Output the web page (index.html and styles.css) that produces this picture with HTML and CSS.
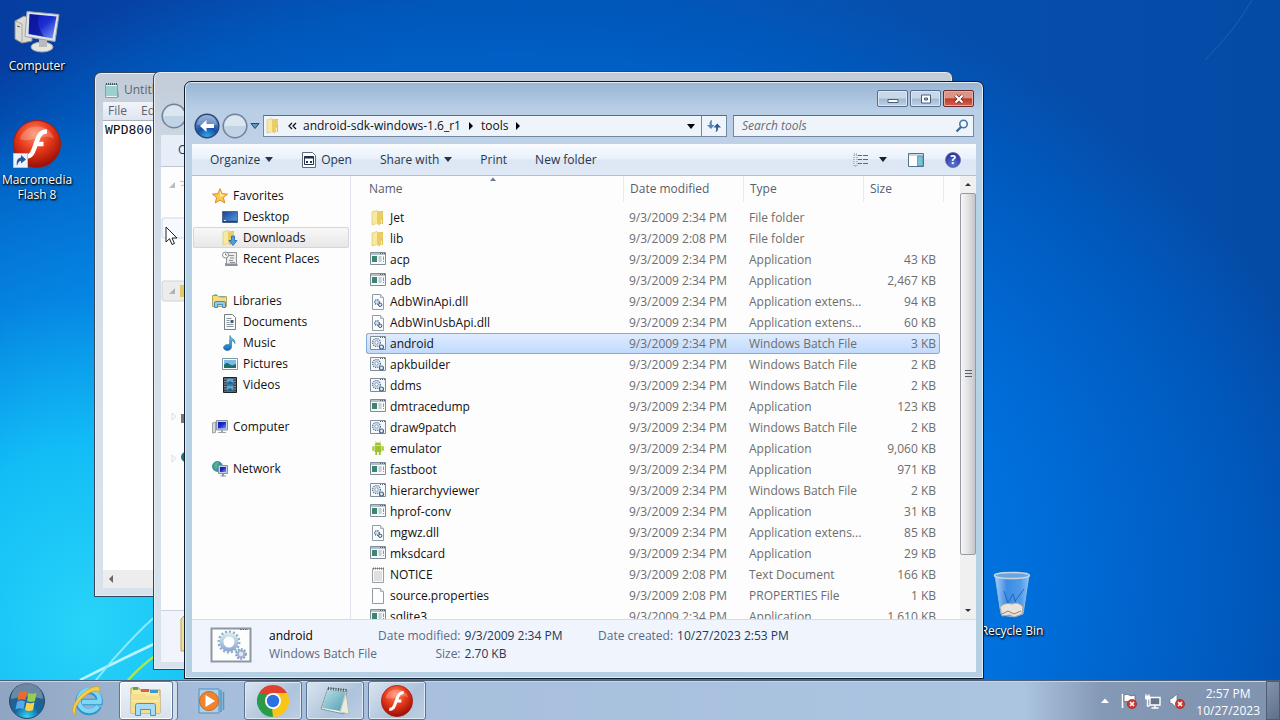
FILE: index.html
```html
<!DOCTYPE html>
<html lang="en">
<head>
<meta charset="utf-8">
<title>tools</title>
<link rel="stylesheet" href="styles.css">
</head>
<body>
<svg class="defs" aria-hidden="true">
  <defs>
    <linearGradient id="gFolder" x1="0" x2="1"><stop offset="0" stop-color="#fbeda0"/><stop offset="1" stop-color="#dcba4c"/></linearGradient>
    <linearGradient id="gScreen" x1="0" x2="1" y2="1"><stop offset="0" stop-color="#0a18b0"/><stop offset=".5" stop-color="#1c2ed0"/><stop offset="1" stop-color="#7ea0f4"/></linearGradient>
    <linearGradient id="gBlue" x1="0" x2="0" y1="0" y2="1"><stop offset="0" stop-color="#7fd0ee"/><stop offset="1" stop-color="#1468b4"/></linearGradient>
    <linearGradient id="gGear" x1="0" x2="0" y1="0" y2="1"><stop offset="0" stop-color="#d3e8ea"/><stop offset="1" stop-color="#8facd8"/></linearGradient>
    <linearGradient id="gPad" x1="0" x2="1" y1="0" y2="1"><stop offset="0" stop-color="#c3e2e8"/><stop offset="1" stop-color="#4d9fb0"/></linearGradient>
    <linearGradient id="gDesk" x1="0" x2="1" y1="0" y2="1"><stop offset="0" stop-color="#18408e"/><stop offset="1" stop-color="#5da0e8"/></linearGradient>
    <radialGradient id="gFlash" cx=".45" cy=".3" r=".75"><stop offset="0" stop-color="#fb8a62"/><stop offset=".45" stop-color="#e93a1c"/><stop offset="1" stop-color="#8c0804"/></radialGradient>
    <radialGradient id="gOrb" cx=".5" cy=".95" r=".9"><stop offset="0" stop-color="#35d6f4"/><stop offset=".4" stop-color="#12689f"/><stop offset="1" stop-color="#3a5878"/></radialGradient>
    <radialGradient id="gBack" cx=".5" cy="1" r=".9"><stop offset="0" stop-color="#3fb0ee"/><stop offset=".5" stop-color="#1450a8"/><stop offset="1" stop-color="#6f93c8"/></radialGradient>
    <linearGradient id="gBin" x1="0" x2="1"><stop offset="0" stop-color="#a9cff6"/><stop offset=".35" stop-color="#3c8ce4"/><stop offset=".75" stop-color="#4f9bea"/><stop offset="1" stop-color="#8cc0f4"/></linearGradient>
  </defs>
  <symbol id="folder" viewBox="0 0 16 16"><path d="M2 2l5-1.500v13L2 15z" fill="#f7e9a0" stroke="#d9c36a" stroke-width=".6"/><path d="M6 1h7v13H6z" fill="url(#gFolder)"/><path d="M7 1v13l3 1.500V8l3-1V2z" fill="#e8cd6a"/><path d="M11.500 9.500v4" stroke="#fff4b4"/></symbol>
  <symbol id="app" viewBox="0 0 16 16"><path d="M.5.500h15v12H.5z" fill="#f7f9fa" stroke="#7f8d98"/><path d="M1 2h14" stroke="#b4c0ca" stroke-width="2"/><path d="M10 1.500h1m1 0h1m1 0h1" stroke="#53616e"/><path d="M2 4h5v6H2z" fill="#3b8577"/><path d="M8.500 5h3m-3 2h3m-3 2h3" stroke="#9aa5ad"/><path d="M13.500 4.500V8m0 1v1" stroke="#7e98c4"/></symbol>
  <symbol id="batch" viewBox="0 0 16 16"><path d="M.5.500h15v13H.5z" fill="#f4f8fb" stroke="#7f8d98"/><path d="M10 1.500h1m1 0h1m1 0h1" stroke="#53616e"/><circle cx="6.500" cy="6.500" r="3.900" fill="#dce8f2" stroke="#506f94" stroke-width="1.300" stroke-dasharray="1.100 1"/><circle cx="6.500" cy="6.500" r="1.700" fill="#fff" stroke="#6e88a8" stroke-width=".8"/><circle cx="11.500" cy="11" r="2" fill="#e9f1f7" stroke="#456489" stroke-width="1.200"/></symbol>
  <symbol id="dll" viewBox="0 0 16 16"><path d="M2.500.5h8l3 3v12h-11z" fill="#fbfcfd" stroke="#929ca6"/><path d="M10.500.5v3h3" fill="#dde4ea" stroke="#a7b0b8"/><circle cx="7" cy="8" r="2.300" fill="#d2dfeb" stroke="#46617f" stroke-width="1.200" stroke-dasharray="1.200 .8"/><circle cx="10.200" cy="10.800" r="1.700" fill="#e2ebf2" stroke="#39567a"/></symbol>
  <symbol id="textfile" viewBox="0 0 16 16"><path d="M2.500 1.500h11v14h-11z" fill="#fafafa" stroke="#9ba0a5"/><path d="M3 1.500h11" stroke="#6f777e" stroke-width="2" stroke-dasharray="1 1"/><path d="M4 5h8M4 7h8M4 9h8M4 11h8M4 13h8" stroke="#bbbfc4" stroke-width=".9"/></symbol>
  <symbol id="blank" viewBox="0 0 16 16"><path d="M2.500.5h8l3 3v12h-11z" fill="#fdfdfd" stroke="#929ca6"/><path d="M10.500.5v3h3" fill="#e8e8e8" stroke="#a7b0b8"/></symbol>
  <symbol id="droid" viewBox="0 0 16 16"><path d="M4.500 4.500c0-4 7-4 7 0zM4.500 5h7v6h-7zM5.300 11h1.900v3H5.300zM8.800 11h1.900v3H8.800zM2.300 5.200h1.600v4.500H2.300zM12.100 5.200h1.600v4.500h-1.600z" fill="#a0c030"/><path d="M5.400.3l1 1.800M10.600.3l-1 1.800" stroke="#a0c030" stroke-width=".7"/></symbol>
  <symbol id="star" viewBox="0 0 16 16"><path d="M8 .7l2.100 5 5.400.4-4.100 3.500 1.300 5.300L8 12.100l-4.700 2.800 1.300-5.300L.5 6.100l5.400-.4z" fill="#fbc94e" stroke="#dd7d22" stroke-width=".9"/><path d="M8 2.500l1.400 4 3.600.4-5 2z" fill="#fff0a8"/></symbol>
  <symbol id="desktop" viewBox="0 0 16 16"><path d="M.5 2.500h15v11H.5z" fill="url(#gDesk)" stroke="#51688e"/><path d="M1 12.500h14" stroke="#24436f" stroke-width="1.500"/><path d="M2 11h2v1H2z" fill="#d8e8f8"/></symbol>
  <symbol id="downloads" viewBox="0 0 16 16"><use href="#folder" x="-1" width="16" height="16"/><path d="M9.500 6h3v4.500H15L11 15.500 7 10.500h2.500z" fill="#4b9fe2" stroke="#2166ac" stroke-width=".8"/></symbol>
  <symbol id="recent" viewBox="0 0 16 16"><path d="M4.500 1.500h10v11l1 2H3.500v-2h1z" fill="#ececec" stroke="#8f9498"/><path d="M7 4.500h5M8 7h4M7 9.500h4m-3 2h5" stroke="#8b9196"/><path d="M3 13.500h12" stroke="#8b9196" stroke-width="2"/><circle cx="3.500" cy="4" r="3" fill="#fff" stroke="#888d92"/><path d="M3.500 2.300V4H5" fill="none" stroke="#666" stroke-width=".8"/></symbol>
  <symbol id="libraries" viewBox="0 0 16 16"><path d="M.5 2.500h5l1 1h8v10H.5z" fill="#f4dc86" stroke="#b9a258"/><path d="M2 2h3" stroke="#49a061"/><path d="M8 4h5" stroke="#6ba9c8"/><path d="M2.500 14.500V10q0-1.500 1.500-1.500h8q1.500 0 1.500 1.500v4.500h-3v-3h-5v3z" fill="#8fcbe9" stroke="#458db5"/></symbol>
  <symbol id="doc" viewBox="0 0 16 16"><path d="M2.500.5h8l3 3v12h-11z" fill="#fbfbfb" stroke="#767d84"/><path d="M4.500 4.500h5m-5 2h3m-3 2h3m-3 2h7m-7 2h7" stroke="#8c96a0"/><path d="M8.500 6h3v3h-3z" fill="#4b5a68"/></symbol>
  <symbol id="music" viewBox="0 0 16 16"><path d="M8 .5c.5 3 5.500 3.500 5 8-.8-2-2-2.600-3.500-2.700V12c0 2.200-2 3.500-4.200 3.500S1.500 14 1.500 12.500s2-3 4-3c.8 0 1.500.1 2 .4z" fill="url(#gBlue)" stroke="#1b6aa6" stroke-width=".6"/></symbol>
  <symbol id="pictures" viewBox="0 0 16 16"><path d="M.5 2.500h15v11H.5z" fill="#fff" stroke="#8495a5"/><path d="M2 4h12v8H2z" fill="#78bde8"/><path d="M2 9c3-4 5-1 7 0s3-.5 5-1v4H2z" fill="#236c6c"/></symbol>
  <symbol id="videos" viewBox="0 0 16 16"><path d="M1.500.5h13v15h-13z" fill="#38434e" stroke="#222"/><path d="M4.500 1.500h7v6h-7zM4.500 8.500h7v6h-7z" fill="#57a8dc"/><path d="M5 6l3-2 3 2v1H5zM5 13l3-2 3 2v1H5z" fill="#315f84"/><path d="M3 1.500v13M13 1.500v13" stroke="#dfe4e8" stroke-dasharray="1 1.500"/></symbol>
  <symbol id="pc" viewBox="0 0 16 16"><path d="M.5 4l3-1v10.500l-3 .5z" fill="#d7d9da" stroke="#818589" stroke-width=".7"/><path d="M4.500 1.500h11v9.500h-11z" fill="#ccd2dc" stroke="#8b919d"/><path d="M6 3h8v6.500H6z" fill="url(#gScreen)"/><path d="M9 11h2v2h3v1H6v-1h3z" fill="#9ca3ae"/></symbol>
  <symbol id="network" viewBox="0 0 16 16"><circle cx="5.500" cy="5.500" r="5" fill="#2e96b9" stroke="#16697e" stroke-width=".6"/><path d="M2 3c2-2 4-2 5-1L5 4l1 2-3 3z" fill="#55b67c"/><path d="M6.500 4.500h9v8h-9z" fill="#c9d0db" stroke="#8b919d"/><path d="M8 6h6v5H8z" fill="url(#gScreen)"/><path d="M10 13h2v1.500h2v1H8.500v-1H10z" fill="#8c93a2"/></symbol>
  <symbol id="flash" viewBox="0 0 48 48"><circle cx="24" cy="24" r="23.500" fill="url(#gFlash)" stroke="#a71a0c"/><path d="M7 19C10 3 37 2 41 19 31 12 17 24 7 19z" fill="#fff" opacity=".22"/><path d="M34 11.500c-8-.5-9 7-11.500 13.500S19 37 12.500 36.500M21 24h9.500" fill="none" stroke="#fff" stroke-width="4.600"/></symbol>
  <symbol id="notepad" viewBox="0 0 32 32"><path d="M9 3l19 2-3 24L2 24z" fill="#f8fafa" stroke="#83939b"/><path d="M9 4l18 2-6 20-18-3z" fill="url(#gPad)"/><path d="M27 8l3 21-9-2z" fill="#eaebdc" stroke="#a8aaa0" stroke-width=".6"/><path d="M9 3.500l19 2" stroke="#4c565b" stroke-width="3" stroke-dasharray="1 1.500"/></symbol>
  <symbol id="pad-small" viewBox="0 0 16 16"><path d="M1.500 2.500h12v13h-12z" fill="#e8f3f2" stroke="#82a5a5"/><path d="M2 4h11v10H2z" fill="#9bd0cf"/><path d="M13.500 3l1.500 12h-2z" fill="#7ba8ac"/><path d="M2 2h12" stroke="#40565a" stroke-width="2" stroke-dasharray="1 1"/></symbol>
  <symbol id="gears" viewBox="0 0 42 36"><path d="M1.500 1.500h39v33h-39z" fill="#fcfdfd" stroke="#8f97a2" stroke-width="2"/><path d="M30 2.500h8" stroke="#5d6670" stroke-dasharray="1.500 1"/><circle cx="19" cy="15" r="9.500" fill="none" stroke="#93afc6" stroke-width="4" stroke-dasharray="2 1.700"/><circle cx="19" cy="15" r="7.500" fill="#fff" stroke="url(#gGear)" stroke-width="4"/><circle cx="31" cy="27" r="4.600" fill="none" stroke="#7f93b2" stroke-width="2.500" stroke-dasharray="1.700 1.300"/><circle cx="31" cy="27" r="3.300" fill="#dfe9f4" stroke="#9fb3d2" stroke-width="2.200"/></symbol>
  <symbol id="nav-round" viewBox="0 0 26 26"><circle cx="13" cy="13" r="11.800" fill="#c3d3e6" stroke="#71839b" stroke-width="1.500"/><path d="M2.500 13a10.500 10.500 0 0 1 21 0z" fill="#dbe6f1"/></symbol>
  <symbol id="bad" viewBox="0 0 10 10"><circle cx="5" cy="5" r="4.600" fill="#cf3830" stroke="#942018" stroke-width=".6"/><path d="M3 3l4 4m0-4L3 7" stroke="#fff" stroke-width="1.600"/></symbol>
</svg>

<main class="desktop">
  <svg class="wallpaper" viewBox="0 0 1280 680" preserveAspectRatio="none" aria-hidden="true">
    <path d="M80 680Q120 660 154 644" stroke="#b9f4ff" stroke-width="2.500"/>
    <path d="M96 680Q128 640 160 612" stroke="#8ee9fc" stroke-width="2"/>
    <path d="M128 680Q142 665 156 655" stroke="#a6e657" stroke-width="2.500"/>
    <path d="M1205 60Q1235 30 1252 0" stroke="#3b83d0" opacity=".4"/>
  </svg>

  <button class="shortcut computer-shortcut">
    <svg width="48" height="44" viewBox="0 0 48 44"><path d="M2 11l9-5 8 3v22l-10 2-7-4z" fill="#dcdcd6" stroke="#8e9190"/><path d="M2 11l7 3v19" fill="none" stroke="#a5a8a6"/><path d="M4 16l3 1" stroke="#555"/><ellipse cx="29" cy="37" rx="11" ry="5" fill="#e5e6e4" stroke="#a6a8a6"/><path d="M26 29l8 1v7h-8z" fill="#b9bcbc"/><path d="M14 1.500l32 3-4 27-30-5z" fill="#dfe3e8" stroke="#9da6b2"/><path d="M16.500 4l27 2.500-4 22-24-4.500z" fill="url(#gScreen)"/><path d="M17 4.500l9 1c-3 8 1 15 5 21l-15-3z" fill="#0a1490" opacity=".7"/></svg>
    <span>Computer</span>
  </button>
  <button class="shortcut flash-shortcut">
    <svg width="50" height="50" viewBox="0 0 50 50"><use href="#flash" x="1" y="0" width="48" height="48"/><path d="M1.500 33.500h14v14h-14z" fill="#eef4fb" stroke="#b8c4d2"/><path d="M5 46c-1-6 1-8 4-8.500V35l5 4.500-5 4v-2.500c-2 0-3 1.500-4 5z" fill="#2458a6"/></svg>
    <span>Macromedia<br>Flash 8</span>
  </button>
  <button class="shortcut bin-shortcut">
    <svg width="40" height="48" viewBox="0 0 40 48"><path d="M3 4h34l-6 39q-11 5-22 0z" fill="url(#gBin)" stroke="#8fbdea"/><path d="M12 20l4 12 5-9 3 10M32 18l-9 12" fill="none" stroke="#2466b8"/><path d="M8 36q5-5 12-3 6-3 11 3l-1 7-8 3-4-2-8 1z" fill="#e8e4dc" stroke="#aaa59c"/><path d="M10 43l6-3 6 3 7-3" stroke="#9c8064" fill="none"/><ellipse cx="20" cy="4.500" rx="17.500" ry="3" fill="#67a6e2" stroke="#c9d6e0" stroke-width="1.500"/></svg>
    <span>Recycle Bin</span>
  </button>

  <section class="window notepad" aria-label="Notepad">
    <header class="notepad-title"><svg width="16" height="16"><use href="#pad-small"/></svg><span>Untitled</span></header>
    <div class="notepad-menu"><button>File</button><button>Edit</button></div>
    <textarea aria-label="Text">WPD800</textarea>
    <div class="notepad-scroll"><svg width="10" height="10" viewBox="0 0 10 10"><path d="M7 1v8L3 5z" fill="#686868"/></svg></div>
  </section>

  <section class="window rear" aria-label="Folder">
    <div class="rear-nav"><svg width="26" height="26"><use href="#nav-round"/></svg></div>
    <div class="rear-bar">Organize</div>
    <div class="rear-body">
      <svg width="24" height="300" viewBox="0 0 24 300"><path d="M14 5v6H8z" fill="#b9bcc0"/><path d="M19 4l4 1M20 9l3-1" stroke="#dfb777"/><rect x="1" y="41" width="30" height="20" rx="2" fill="#f6f9fe" stroke="#cfd8e8"/><rect x="1" y="104" width="30" height="20" rx="2" fill="#ececec" stroke="#d2d2d2"/><path d="M14 111v6H8z" fill="#b0b2b4"/><path d="M19 108h5v12h-5z" fill="#dfca66"/><path d="M11 236v7l4-3.500zM11 278v7l4-3.500z" fill="#fff" stroke="#dcdcdc"/><path d="M20 237h4v9h-4z" fill="#777"/><circle cx="25" cy="280" r="5" fill="#1f6f7a"/></svg>
    </div>
    <div class="rear-details"><svg width="24" height="44" viewBox="0 0 24 44"><path d="M20 8l4-4v36h-4z" fill="#f1df97" stroke="#b9a35b"/></svg></div>
  </section>

  <section class="window explorer" aria-label="tools">
    <header class="titlebar">
      <button class="caption" aria-label="Minimize"><svg width="12" height="8" viewBox="0 0 12 8"><path d="M1 4.500h10v3H1z" fill="#fff" stroke="#4b5c78"/></svg></button>
      <button class="caption" aria-label="Maximize"><svg width="12" height="10" viewBox="0 0 12 10"><path d="M1.500 1h9v8h-9z" fill="#fff" stroke="#4b5c78"/><path d="M4.500 4h3v2h-3z" fill="#a8bdd6" stroke="#4b5c78"/></svg></button>
      <button class="caption close" aria-label="Close"><svg width="12" height="10" viewBox="0 0 12 10"><path d="M2.500 1.500l7 7m0-7l-7 7" stroke="#5c2a2a" stroke-width="3.800"/><path d="M2.500 1.500l7 7m0-7l-7 7" stroke="#fff" stroke-width="2.200"/></svg></button>
    </header>
    <div class="navrow">
      <div class="travel">
        <button aria-label="Back"><svg width="26" height="26" viewBox="0 0 26 26"><circle cx="13" cy="13" r="11.800" fill="url(#gBack)" stroke="#2a4878" stroke-width="1.500"/><path d="M3 12a10 10 0 0 1 20 0z" fill="#fff" opacity=".25"/><path d="M6 13l6.500-6v4H20v4h-7.500v4z" fill="#fff"/></svg></button>
        <button aria-label="Forward"><svg width="26" height="26"><use href="#nav-round"/></svg></button>
        <button aria-label="Recent pages"><svg width="10" height="8" viewBox="0 0 10 8"><path d="M1 1.500h8L5 6.500z" fill="#5d9bc4" stroke="#1f4b78"/></svg></button>
      </div>
      <div class="address">
        <div class="path">
          <svg width="16" height="16"><use href="#folder"/></svg>
          <svg class="chevrons" width="9" height="8" viewBox="0 0 9 8"><path d="M4 1L1 4l3 3M8 1L5 4l3 3" fill="none" stroke="#111" stroke-width="1.300"/></svg>
          <a href="#sdk">android-sdk-windows-1.6_r1</a>
          <svg width="6" height="8" viewBox="0 0 6 8"><path d="M1 0l4 4-4 4z"/></svg>
          <a href="#tools">tools</a>
          <svg width="6" height="8" viewBox="0 0 6 8"><path d="M1 0l4 4-4 4z"/></svg>
        </div>
        <button class="drop" aria-label="Previous locations"><svg width="8" height="5" viewBox="0 0 8 5"><path d="M0 0h8L4 5z"/></svg></button>
        <button class="refresh" aria-label="Refresh"><svg width="16" height="14" viewBox="0 0 16 14"><path d="M6 1C3.500 1.500 3.500 4 3.700 6H1l4 4 3.500-4H6C5.700 4 5.500 2.500 6 1z" fill="#5087bd"/><path d="M9.500 13c2.500-.5 2.700-3 2.500-4.500h3L11.300 4.500 7.500 8.500H10c.3 1.500.3 3-.5 4.500z" fill="#2b5b93"/></svg></button>
      </div>
      <label class="search"><input type="search" placeholder="Search tools" aria-label="Search tools"><svg width="14" height="14" viewBox="0 0 14 14"><circle cx="8.500" cy="5" r="3.700" fill="#f4f9ff" stroke="#4475a8" stroke-width="1.600"/><path d="M6 8l-4.500 4.500" stroke="#3c6594" stroke-width="2.200"/></svg></label>
    </div>
    <div class="toolbar">
      <button class="organize">Organize <svg width="8" height="5" viewBox="0 0 8 5"><path d="M0 0h8L4 5z" fill="#26364c"/></svg></button>
      <button class="open"><svg width="14" height="16" viewBox="0 0 14 16"><path d="M.5.500h10l3 3v12H.5z" fill="#fdfdfd" stroke="#606874"/><path d="M2.500 4.500h9v8h-9z" fill="#fff" stroke="#20304c"/><path d="M2 5.500h10" stroke="#20304c" stroke-width="2"/><path d="M4 9h2v2H4zM8 9h2v2H8z" fill="#1b3a6c"/></svg>Open</button>
      <button class="share">Share with <svg width="8" height="5" viewBox="0 0 8 5"><path d="M0 0h8L4 5z" fill="#26364c"/></svg></button>
      <button class="print">Print</button>
      <button>New folder</button>
      <div class="tools-right">
        <button aria-label="Change your view"><svg width="16" height="14" viewBox="0 0 16 14"><path d="M1 1h3v12H1z" fill="#e6ecf3" stroke="#7c8898" stroke-dasharray="1 1"/><path d="M5 2.500h4m1 0h5M5 6.500h4m1 0h5M5 10.500h4m1 0h5" stroke="#5c6878" stroke-width="1.200"/></svg></button>
        <button aria-label="More options"><svg width="8" height="5" viewBox="0 0 8 5"><path d="M0 0h8L4 5z" fill="#16202e"/></svg></button>
        <button class="preview" aria-label="Preview pane"><svg width="16" height="14" viewBox="0 0 16 14"><path d="M.5.500h15v13H.5z" fill="#fff" stroke="#54718e"/><path d="M1 2h14" stroke="#91b2cc"/><path d="M9.500 3h5.500v10H9.500z" fill="#73c4d8" stroke="#54718e" stroke-width=".6"/></svg></button>
        <button class="help" aria-label="Help">?</button>
      </div>
    </div>
    <div class="panes">
      <nav class="places" aria-label="Places">
        <ul>
          <li><a href="#favorites"><svg><use href="#star"/></svg>Favorites</a>
            <ul>
              <li><a href="#desktop"><svg><use href="#desktop"/></svg>Desktop</a></li>
              <li><a class="current" href="#downloads"><svg><use href="#downloads"/></svg>Downloads</a></li>
              <li><a href="#recent"><svg><use href="#recent"/></svg>Recent Places</a></li>
            </ul>
          </li>
          <li><a href="#libraries"><svg><use href="#libraries"/></svg>Libraries</a>
            <ul>
              <li><a href="#documents"><svg><use href="#doc"/></svg>Documents</a></li>
              <li><a href="#music"><svg><use href="#music"/></svg>Music</a></li>
              <li><a href="#pictures"><svg><use href="#pictures"/></svg>Pictures</a></li>
              <li><a href="#videos"><svg><use href="#videos"/></svg>Videos</a></li>
            </ul>
          </li>
          <li><a href="#computer"><svg><use href="#pc"/></svg>Computer</a></li>
          <li><a href="#network"><svg><use href="#network"/></svg>Network</a></li>
        </ul>
      </nav>
      <div class="files">
        <table>
          <colgroup><col><col class="c-date"><col class="c-type"><col class="c-size"></colgroup>
          <thead><tr>
            <th><svg class="sort" width="6" height="4" viewBox="0 0 6 4"><path d="M0 4l3-3.500L6 4z" fill="#687b92"/></svg><span>Name</span></th>
            <th><span>Date modified</span></th><th><span>Type</span></th><th><span>Size</span></th>
          </tr></thead>
          <tbody>
            <tr><td><svg><use href="#folder"/></svg>Jet</td><td>9/3/2009 2:34 PM</td><td>File folder</td><td></td></tr>
            <tr><td><svg><use href="#folder"/></svg>lib</td><td>9/3/2009 2:08 PM</td><td>File folder</td><td></td></tr>
            <tr><td><svg><use href="#app"/></svg>acp</td><td>9/3/2009 2:34 PM</td><td>Application</td><td>43 KB</td></tr>
            <tr><td><svg><use href="#app"/></svg>adb</td><td>9/3/2009 2:34 PM</td><td>Application</td><td>2,467 KB</td></tr>
            <tr><td><svg><use href="#dll"/></svg>AdbWinApi.dll</td><td>9/3/2009 2:34 PM</td><td>Application extens...</td><td>94 KB</td></tr>
            <tr><td><svg><use href="#dll"/></svg>AdbWinUsbApi.dll</td><td>9/3/2009 2:34 PM</td><td>Application extens...</td><td>60 KB</td></tr>
            <tr class="selected"><td><svg><use href="#batch"/></svg>android</td><td>9/3/2009 2:34 PM</td><td>Windows Batch File</td><td>3 KB</td></tr>
            <tr><td><svg><use href="#batch"/></svg>apkbuilder</td><td>9/3/2009 2:34 PM</td><td>Windows Batch File</td><td>2 KB</td></tr>
            <tr><td><svg><use href="#batch"/></svg>ddms</td><td>9/3/2009 2:34 PM</td><td>Windows Batch File</td><td>2 KB</td></tr>
            <tr><td><svg><use href="#app"/></svg>dmtracedump</td><td>9/3/2009 2:34 PM</td><td>Application</td><td>123 KB</td></tr>
            <tr><td><svg><use href="#batch"/></svg>draw9patch</td><td>9/3/2009 2:34 PM</td><td>Windows Batch File</td><td>2 KB</td></tr>
            <tr><td><svg><use href="#droid"/></svg>emulator</td><td>9/3/2009 2:34 PM</td><td>Application</td><td>9,060 KB</td></tr>
            <tr><td><svg><use href="#app"/></svg>fastboot</td><td>9/3/2009 2:34 PM</td><td>Application</td><td>971 KB</td></tr>
            <tr><td><svg><use href="#batch"/></svg>hierarchyviewer</td><td>9/3/2009 2:34 PM</td><td>Windows Batch File</td><td>2 KB</td></tr>
            <tr><td><svg><use href="#app"/></svg>hprof-conv</td><td>9/3/2009 2:34 PM</td><td>Application</td><td>31 KB</td></tr>
            <tr><td><svg><use href="#dll"/></svg>mgwz.dll</td><td>9/3/2009 2:34 PM</td><td>Application extens...</td><td>85 KB</td></tr>
            <tr><td><svg><use href="#app"/></svg>mksdcard</td><td>9/3/2009 2:34 PM</td><td>Application</td><td>29 KB</td></tr>
            <tr><td><svg><use href="#textfile"/></svg>NOTICE</td><td>9/3/2009 2:08 PM</td><td>Text Document</td><td>166 KB</td></tr>
            <tr><td><svg><use href="#blank"/></svg>source.properties</td><td>9/3/2009 2:08 PM</td><td>PROPERTIES File</td><td>1 KB</td></tr>
            <tr><td><svg><use href="#app"/></svg>sqlite3</td><td>9/3/2009 2:34 PM</td><td>Application</td><td>1,610 KB</td></tr>
          </tbody>
        </table>
      </div>
      <div class="scrollbar" aria-hidden="true">
        <span class="arrow"><svg width="6" height="3" viewBox="0 0 6 3"><path d="M0 3l3-3 3 3z" fill="#333"/></svg></span>
        <span class="thumb"><svg width="7" height="8" viewBox="0 0 7 8"><path d="M0 .5h7M0 3.500h7M0 6.500h7" stroke="#5c6066"/></svg></span>
        <span class="arrow"><svg width="6" height="3" viewBox="0 0 6 3"><path d="M0 0l3 3 3-3z" fill="#333"/></svg></span>
      </div>
    </div>
    <footer class="details">
      <svg width="42" height="36"><use href="#gears"/></svg>
      <div class="file-id"><strong>android</strong><span>Windows Batch File</span></div>
      <dl class="modified"><dt>Date modified:</dt><dd>9/3/2009 2:34 PM</dd><dt>Size:</dt><dd>2.70 KB</dd></dl>
      <dl><dt>Date created:</dt><dd>10/27/2023 2:53 PM</dd></dl>
    </footer>
  </section>

  <svg class="pointer" width="13" height="20" viewBox="0 0 13 20" aria-hidden="true"><path d="M1 1v15l3.500-3.300L7 18.500l2.500-1L7 12h5z" fill="#fff" stroke="#222"/></svg>
</main>

<footer class="taskbar">
  <button class="task start" aria-label="Start"><svg width="38" height="38" viewBox="0 0 38 38"><circle cx="19" cy="19" r="17.500" fill="url(#gOrb)" stroke="#27476d"/><path d="M3 17a16 16 0 0 1 32 0q-15-5-32 0z" fill="#fff" opacity=".28"/><path d="M11 10.500q4-2.500 8-.5l-1.500 8q-4-1.500-8 .5z" fill="#ee6a2a"/><path d="M20.500 10.800q4 2 8 0L27 19q-4 2-8 0z" fill="#9ccc4c"/><path d="M9 20q4-2.500 8-.5l-1.500 7.500q-4-1.500-8 .5z" fill="#58a8ea"/><path d="M18.500 20.300q4 2 8 0L25 28q-4 2-8 0z" fill="#fbd04a"/></svg></button>
  <button class="task ie" aria-label="Internet Explorer"><svg width="34" height="34" viewBox="0 0 34 34"><path d="M28.500 22A10.500 10.500 0 1 1 29.500 18H12" fill="none" stroke="#2f94cf" stroke-width="6.500"/><path d="M28 22A10.500 10.500 0 1 1 29.500 18H12" fill="none" stroke="#7dd6f6" stroke-width="4.500"/><path d="M6 31C-3 28 8 10 19 5c8-4.500 13-3 10 4C28 1 1 17 6 31z" fill="#f4cf4b" stroke="#d59b1e" stroke-width=".8"/></svg></button>
  <button class="task running active stack" aria-label="Windows Explorer"><svg width="34" height="32" viewBox="0 0 34 32"><path d="M2 3h8l1 2h20v23H2z" fill="#f8e9a2" stroke="#b99c48"/><path d="M4 2h5v3H4z" fill="#4cae58"/><path d="M12 4h8v3h-8z" fill="#e5594a"/><path d="M21 5h8v3h-8z" fill="#3e9cc8"/><path d="M2 9h14l1 2h14v17H2z" fill="#f5df8c"/><path d="M3 16h27" stroke="#fff4bf"/><path d="M6.500 30.500v-10q0-2 2-2h16q2 0 2 2v10h-5v-6h-10v6z" fill="#a8dcf6" stroke="#4a93bf"/></svg></button>
  <button class="task" aria-label="Windows Media Player"><svg width="32" height="30" viewBox="0 0 32 30"><path d="M4 3h20v24H4z" fill="#abd0ea" stroke="#508fbd"/><path d="M26 4v22M28.500 6v18" stroke="#4e9ac6" stroke-width="1.500"/><circle cx="14" cy="15" r="9.500" fill="#ee8430" stroke="#cf641c"/><path d="M10.500 9l9.500 6-9.500 6z" fill="#fff"/></svg></button>
  <button class="task running" aria-label="Google Chrome"><svg width="32" height="32" viewBox="0 0 32 32"><path d="M16 16L2.140 8A16 16 0 0 1 29.860 8z" fill="#e0402f"/><path d="M16 16L29.860 8A16 16 0 0 1 16 32z" fill="#fbc418"/><path d="M16 16v16A16 16 0 0 1 2.140 8z" fill="#289c48"/><path d="M16 8h13.860L23 20z" fill="#fbc418"/><path d="M9 20L2.140 8 16 8z" fill="#e0402f"/><path d="M9.100 20L2.140 8 12 10z" fill="#289c48"/><path d="M22.900 20L16 32l-1-9z" fill="#fbc418"/><circle cx="16" cy="16" r="8" fill="#fff"/><circle cx="16" cy="16" r="6.200" fill="#2d70e3"/></svg></button>
  <button class="task running" aria-label="Notepad"><svg width="32" height="32"><use href="#notepad"/></svg></button>
  <button class="task running" aria-label="Flash"><svg width="32" height="32"><use href="#flash"/></svg></button>
  <div class="tray">
    <button aria-label="Show hidden icons"><svg width="8" height="5" viewBox="0 0 8 5"><path d="M0 5l4-4.500L8 5z" fill="#fff"/></svg></button>
    <button aria-label="Action Center"><svg width="16" height="16" viewBox="0 0 16 16"><path d="M1.500 1v14" stroke="#fff" stroke-width="1.500"/><path d="M3 2q3-1.500 5 0t6 0v7q-3 1.500-5.500 0T3 9z" fill="#fff" stroke="#47566c" stroke-width=".7"/><use href="#bad" x="6" y="6" width="10" height="10"/></svg></button>
    <button aria-label="Network"><svg width="16" height="16" viewBox="0 0 16 16"><path d="M5 4.500h10v7.500H5z" fill="#66758c" stroke="#fff" stroke-width="1.400"/><path d="M10 12v2.500M6.500 15h7M2.500 6v7h2" fill="none" stroke="#fff" stroke-width="1.400"/><path d="M1 1v2m3-2v2M.5 3h4v3h-4z" fill="#fff" stroke="#fff"/></svg></button>
    <button aria-label="Volume"><svg width="16" height="16" viewBox="0 0 16 16"><path d="M1 5.500h2L8 1v14l-5-4.500H1z" fill="#fff" stroke="#53637a" stroke-width=".6"/><use href="#bad" x="6" y="6" width="10" height="10"/></svg></button>
    <time datetime="2023-10-27T14:57">2:57 PM<br>10/27/2023</time>
  </div>
  <button class="peek" aria-label="Show desktop"></button>
</footer>
</body>
</html>
```

FILE: styles.css
```css
* { box-sizing: border-box; }
body {
  margin: 0;
  height: 100vh;
  display: flex;
  flex-direction: column;
  overflow: hidden;
  font: 12px/16px "Open Sans", "Noto Sans", sans-serif;
  color: #111;
}
button {
  font: inherit;
  color: inherit;
  background: none;
  border: 0;
  padding: 0;
  display: flex;
  align-items: center;
  white-space: nowrap;
}
a { color: inherit; text-decoration: none; }
ul, dl, dd { list-style: none; margin: 0; padding: 0; }
svg { display: block; flex: none; }
.defs { position: absolute; width: 0; height: 0; }

/* Desktop */
.desktop {
  flex: 1;
  min-height: 0;
  position: relative;
  overflow: hidden;
  background:
    radial-gradient(ellipse 36% 75% at 7% 92%, #28d4f8 0, #12bdf6 35%, rgba(8, 150, 236, .6) 65%, rgba(5, 100, 205, 0) 100%),
    radial-gradient(ellipse 66% 95% at 40% 85%, #0a8cf0 0, #0070dc 60%, #0058bc 88%, rgba(0, 75, 168, 0) 100%),
    linear-gradient(90deg, #053ea0, #0852b0 50%, #044ba6);
}
.wallpaper { width: 100%; height: 100%; fill: none; }
.shortcut {
  position: absolute;
  flex-direction: column;
  width: 74px;
  gap: 4px;
  line-height: 15px;
  color: #fff;
  text-shadow: 0 1px 2px #000, 1px 1px 2px #000;
}
.computer-shortcut { left: 0; top: 10px; }
.flash-shortcut { left: 0; top: 120px; gap: 2px; }
.bin-shortcut { left: 975px; top: 571px; }

/* Windows */
.window {
  position: absolute;
  display: flex;
  flex-direction: column;
  border: 1px solid #33465c;
  border-radius: 7px 7px 0 0;
  background: linear-gradient(#c2ccd9, #d2dce8 100px, #d8e2ec);
  box-shadow: inset 0 0 0 1px #e4ecf4;
}
.notepad {
  left: 94px;
  top: 72px;
  bottom: 83px;
  width: 600px;
  padding: 8px 7px 8px 8px;
  color: #5b6470;
}
.notepad-title { display: flex; align-items: center; gap: 4px; height: 18px; padding-left: 1px; margin-bottom: 3px; }
.notepad-menu {
  display: flex;
  gap: 14px;
  height: 18px;
  padding-left: 5px;
  background: linear-gradient(#f2f4fa, #dfe4f0);
}
.notepad textarea {
  flex: 1;
  resize: none;
  border: 0;
  border-top: 1px solid #a9b1bc;
  padding: 1px 2px;
  background: #fff;
  color: #111;
  font: 13px/16px "DejaVu Sans Mono", monospace;
}
.notepad-scroll { display: flex; align-items: center; height: 18px; padding-left: 3px; background: #ededed; }
.rear {
  left: 153px;
  top: 71px;
  bottom: 10px;
  width: 800px;
  padding: 31px 7px 7px;
}
.rear-nav { height: 32px; }
.rear-bar {
  height: 32px;
  padding: 7px 17px;
  background: #e8eef7;
  border-bottom: 1px solid #bcc6d4;
  color: #2b3a50;
}
.rear-body { flex: 1; background: #fdfdfe; padding-top: 10px; }
.rear-details { height: 52px; background: #f1f5fb; border-top: 1px solid #ccd3de; }

/* Explorer */
.explorer {
  left: 184px;
  top: 81px;
  bottom: 1px;
  width: 800px;
  padding: 0 7px 6px;
  border-color: #101c2c;
  background: linear-gradient(#98b5d3, #b9cfe6 28px, #bfd1e6 62px, #b7d3e6 120px, #b4d0e2);
}
.titlebar { display: flex; justify-content: flex-end; gap: 2px; height: 32px; padding: 8px 2px 7px; }
.caption {
  width: 31px;
  height: 17px;
  justify-content: center;
  border: 1px solid #566d8d;
  border-radius: 2px;
  background: linear-gradient(#c8d8e9 48%, #a0b8d3 52%, #bfd2e6);
  box-shadow: inset 0 0 0 1px #dbe7f3;
}
.caption.close {
  border-color: #642c34;
  background: linear-gradient(#dc9484 46%, #bd3928 52%, #d3664c);
  box-shadow: inset 0 0 0 1px #e7ad9e;
}
.navrow { display: flex; align-items: center; height: 24px; padding: 0 2px; margin-bottom: 6px; }
.travel { display: flex; align-items: center; gap: 2px; width: 69px; }
.address, .search {
  display: flex;
  align-items: center;
  height: 22px;
  border: 1px solid #7188a5;
  border-top-color: #536c8c;
  background: #eff4fb;
}
.address { flex: 1; margin-right: 6px; }
.path { flex: 1; display: flex; align-items: center; gap: 7px; padding-left: 1px; }
.path .chevrons { margin-right: -1px; }
.drop { padding: 0 6px; }
.refresh { width: 25px; height: 20px; justify-content: center; border-left: 1px solid #7188a5; }
.search { width: 241px; padding: 0 4px 0 8px; }
.search input {
  flex: 1;
  min-width: 0;
  border: 0;
  outline: 0;
  padding: 0;
  background: none;
  font: italic 12px/16px "Open Sans", "Noto Sans", sans-serif;
}
.search input::placeholder { color: #656b73; opacity: 1; }
.toolbar {
  display: flex;
  align-items: center;
  height: 32px;
  padding: 0 15px 0 18px;
  border-bottom: 1px solid #adbfd4;
  background: linear-gradient(#fafcff, #e9f1fb 46%, #dce6f4 52%, #e0eaf6);
  color: #26364f;
}
.toolbar button { gap: 5px; }
.toolbar .organize { margin-right: 29px; }
.toolbar .open { margin-right: 28px; }
.toolbar .share, .toolbar .print { margin-right: 28px; }
.tools-right { display: flex; align-items: center; gap: 10px; margin-left: auto; }
.tools-right .preview { margin: 0 11px; }
.tools-right .help {
  width: 16px;
  height: 16px;
  justify-content: center;
  border: 1px solid #6870a8;
  border-radius: 8px;
  background: radial-gradient(circle at 50% 80%, #5c78dc, #20208c);
  color: #fff;
  font-weight: 700;
}
.panes { flex: 1; min-height: 0; display: flex; background: #fdfdfd; }
.places { width: 159px; padding: 9px 1px; border-right: 1px solid #e1e6ee; }
.places > ul > li + li { margin-top: 21px; }
.places a {
  display: flex;
  align-items: center;
  gap: 5px;
  height: 21px;
  padding-left: 18px;
  border: 1px solid transparent;
}
.places li li a { padding-left: 28px; }
.places svg, td svg { width: 16px; height: 16px; }
.places .current { border-color: #d6d6d6; border-radius: 2px; background: linear-gradient(#f8f8f8, #e7e7e7); }
.files { flex: 1; min-width: 0; overflow: hidden; padding: 0 20px 0 15px; }
table { width: 100%; table-layout: fixed; border-spacing: 0; }
.c-date, .c-type { width: 120px; }
.c-size { width: 77px; }
th {
  position: relative;
  height: 31px;
  padding: 0 0 5px;
  font-weight: 400;
  text-align: left;
  color: #56606e;
}
th span { display: block; height: 26px; padding: 5px 6px; border-left: 1px solid #e7ebf1; }
th:first-child span { padding-left: 3px; border: 0; }
th:last-child::after { content: ""; position: absolute; right: -4px; top: 0; height: 26px; border-right: 1px solid #e7ebf1; }
.sort { position: absolute; left: 124px; top: 1px; }
td { height: 21px; padding: 0 6px; color: #6d6d6d; white-space: nowrap; border: solid transparent; border-width: 1px 0; }
td:first-child { display: flex; align-items: center; gap: 4px; color: #111; padding-left: 3px; border-left-width: 1px; }
td:last-child { text-align: right; padding-right: 3px; border-right-width: 1px; }
.selected td { border-color: #84acdd; background: linear-gradient(#dfecfe, #c1dafc) padding-box; }
.selected td:first-child { border-radius: 3px 0 0 3px; }
.selected td:last-child { border-radius: 0 3px 3px 0; }
.scrollbar { display: flex; flex-direction: column; width: 16px; background: #f0f0f0; }
.arrow { display: flex; align-items: center; justify-content: center; height: 17px; }
.thumb {
  flex: 1;
  display: flex;
  align-items: center;
  justify-content: center;
  margin-bottom: 47px;
  border: 1px solid #969ba3;
  border-radius: 2px;
  background: linear-gradient(90deg, #f6f6f6, #e4e4e7 45%, #c5c6cc);
}
.details {
  display: flex;
  height: 53px;
  padding: 7px 18px;
  border-top: 1px solid #d3dcea;
  background: #f0f4fc;
  line-height: 18px;
  color: #5a6b85;
}
.file-id { display: flex; flex-direction: column; width: 109px; margin-left: 17px; white-space: nowrap; }
.file-id strong { font-weight: 400; color: #000; }
.details dl { display: grid; grid-template-columns: auto auto; column-gap: 4px; align-content: start; white-space: nowrap; }
.details dt { text-align: right; }
.details dd { color: #1e395b; }
.details .modified { width: 220px; justify-content: start; }
.pointer { position: absolute; left: 165px; top: 226px; }

/* Taskbar */
.taskbar {
  display: flex;
  height: 40px;
  border-top: 1px solid #4c6179;
  background: linear-gradient(90deg, #8fa5c2, #a6bedb 16%, #abc4e0 80%, #8499b6 86%, #8093af);
  box-shadow: inset 0 1px 0 #c3d5e8;
}
.task { width: 58px; margin-right: 4px; justify-content: center; }
.task.start { width: 54px; margin-right: 5px; }
.task.ie { width: 56px; }
.task.running {
  border: 1px solid #5d7595;
  border-radius: 3px;
  background: linear-gradient(135deg, #dae4ef, #aec3dc 60%, #bccfe4);
  box-shadow: inset 0 0 0 1px #dfe9f4;
}
.task.active { background: linear-gradient(#edf3f9, #d5e1ee); }
.task.stack { width: 54px; margin-right: 9px; box-shadow: inset 0 0 0 1px #fff, 4px 0 0 #cfdcea, 5px 0 0 #5d7595; }
.tray { display: flex; align-items: center; gap: 8px; margin-left: auto; color: #fff; }
.tray button:first-child { margin-right: 4px; }
.tray time { padding: 2px 2px 0 3px; line-height: 17px; text-align: center; }
.peek { width: 14px; margin-left: 4px; border: 1px solid #4c5e76; background: linear-gradient(135deg, #8293ab, #5f7189); }
```
